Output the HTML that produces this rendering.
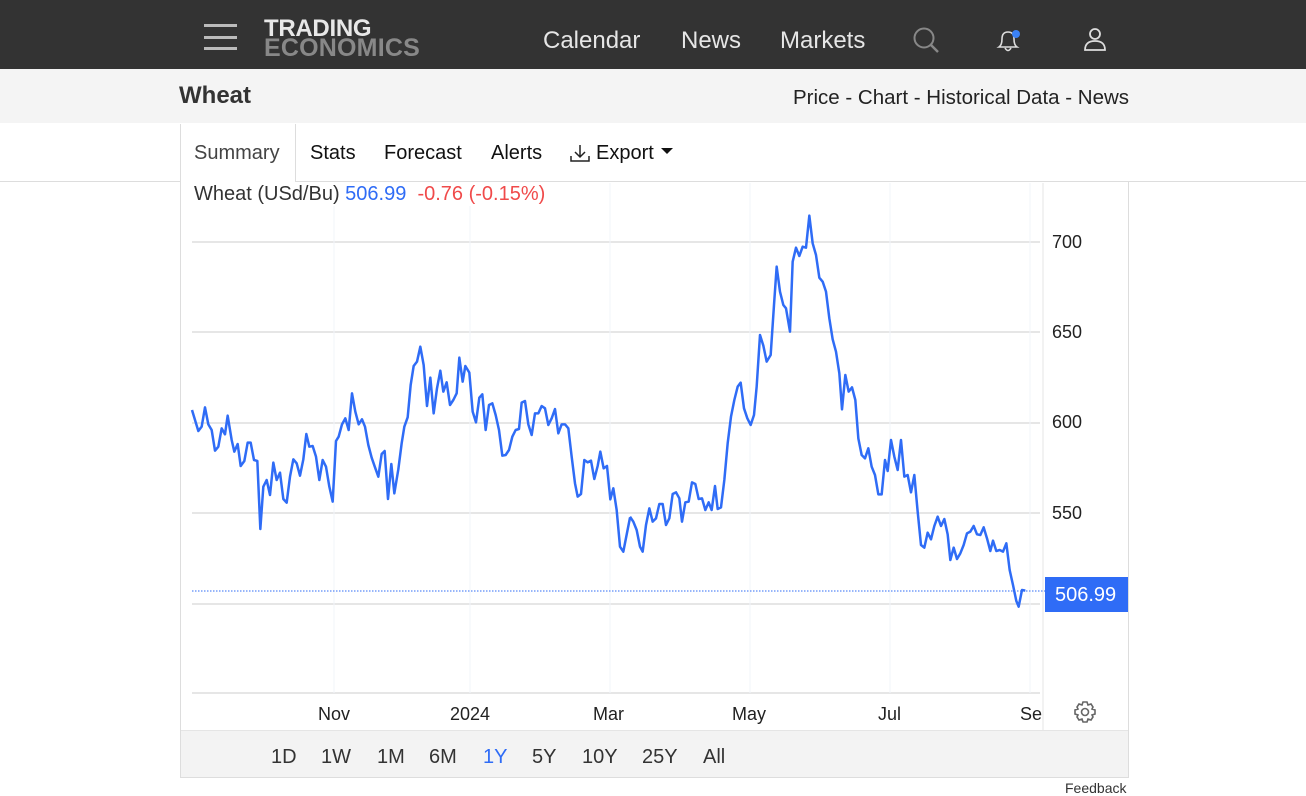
<!DOCTYPE html>
<html><head><meta charset="utf-8"><style>
*{margin:0;padding:0;box-sizing:border-box}
body{width:1306px;height:794px;overflow:hidden;background:#fff;font-family:"Liberation Sans",Arial,sans-serif;position:relative;color:#222}
.hdr{position:absolute;left:0;top:0;width:1306px;height:69px;background:#333}
.nav{position:absolute;top:27px;color:#e6e6e6;font-size:24px}
.sub{position:absolute;left:0;top:69px;width:1306px;height:54px;background:#f4f4f4}
.abs{position:absolute}
.tab{position:absolute;top:142px;font-size:20px;color:#111}
.ax{position:absolute;font-size:18px;color:#222}
.rg{position:absolute;top:746px;font-size:20px;color:#333}
</style></head><body>
<div class="hdr">
 <div class="abs" style="left:204px;top:24px;width:33px;height:3px;background:#bbb"></div>
 <div class="abs" style="left:204px;top:36px;width:33px;height:3px;background:#bbb"></div>
 <div class="abs" style="left:204px;top:47px;width:33px;height:3px;background:#bbb"></div>
 <div class="abs" style="left:264px;top:18px;font-size:24px;font-weight:bold;color:#e8e8e8;line-height:21px;letter-spacing:-0.3px">TRADING</div>
 <div class="abs" style="left:264px;top:38px;font-size:25px;font-weight:bold;color:#888;line-height:21px;letter-spacing:0.2px">ECONOMICS</div>
 <div class="nav" style="left:543px">Calendar</div>
 <div class="nav" style="left:681px">News</div>
 <div class="nav" style="left:780px">Markets</div>
 <svg class="abs" style="left:910px;top:24px" width="32" height="32"><circle cx="14" cy="14" r="9.5" fill="none" stroke="#888" stroke-width="2"/><line x1="21" y1="21" x2="28" y2="28" stroke="#888" stroke-width="2.5"/></svg>
 <svg class="abs" style="left:994px;top:26px" width="30" height="30"><path d="M5 21 Q8 19 8 13 Q8 6 14 6 Q20 6 20 13 Q20 19 23 21 Z" fill="none" stroke="#ddd" stroke-width="1.6"/><path d="M11 22 Q14 27 17 22" fill="none" stroke="#ddd" stroke-width="1.6"/><circle cx="22" cy="8" r="4" fill="#3b82f6"/></svg>
 <svg class="abs" style="left:1082px;top:26px" width="28" height="28"><circle cx="13" cy="8" r="5" fill="none" stroke="#ddd" stroke-width="1.8"/><path d="M3 24 Q3 15 13 15 Q23 15 23 24 Z" fill="none" stroke="#ddd" stroke-width="1.8"/></svg>
</div>
<div class="sub">
 <div class="abs" style="left:179px;top:13px;font-size:24px;font-weight:bold;color:#333">Wheat</div>
 <div class="abs" style="left:793px;top:17px;font-size:20.5px;color:#222">Price - Chart - Historical Data - News</div>
</div>
<div class="abs" style="left:0;top:181px;width:1306px;height:1px;background:#ddd"></div>
<div class="abs" style="left:180px;top:124px;width:116px;height:58px;border-left:1px solid #ddd;border-right:1px solid #ddd;background:#fff"></div>
<div class="tab" style="left:194px;color:#444">Summary</div>
<div class="tab" style="left:310px">Stats</div>
<div class="tab" style="left:384px">Forecast</div>
<div class="tab" style="left:491px">Alerts</div>
<svg class="abs" style="left:569px;top:142px" width="22" height="22"><path d="M11 3 V15 M6 10 L11 15 L16 10 M2 14 V19 H20 V14" fill="none" stroke="#222" stroke-width="1.5"/></svg>
<div class="tab" style="left:596px">Export</div>
<svg class="abs" style="left:661px;top:148px" width="12" height="8"><path d="M0 0 H12 L6 6 Z" fill="#111"/></svg>
<div class="abs" style="left:180px;top:182px;width:949px;height:596px;border:1px solid #ddd;border-top:none"></div>
<div class="abs" style="left:181px;top:730px;width:947px;height:47px;background:#f3f3f3;border-top:1px solid #e5e5e5"></div>
<svg class="abs" style="left:0;top:0" width="1306" height="794">
 <g stroke="#e6e6e6" stroke-width="2">
  <line x1="192" y1="242" x2="1040" y2="242"/><line x1="192" y1="332" x2="1040" y2="332"/><line x1="192" y1="423" x2="1040" y2="423"/><line x1="192" y1="513" x2="1040" y2="513"/><line x1="192" y1="604" x2="1040" y2="604"/><line x1="192" y1="693" x2="1040" y2="693"/>
 </g>
 <g stroke="#f1f4f9" stroke-width="1">
  <line x1="334" y1="183" x2="334" y2="693"/><line x1="470" y1="183" x2="470" y2="693"/><line x1="610" y1="183" x2="610" y2="693"/><line x1="750" y1="183" x2="750" y2="693"/><line x1="890" y1="183" x2="890" y2="693"/><line x1="1030" y1="183" x2="1030" y2="693"/>
 </g>
 <line x1="1043" y1="183" x2="1043" y2="730" stroke="#e5e5e5" stroke-width="1"/>
 <line x1="192" y1="591" x2="1045" y2="591" stroke="#2f6cf6" stroke-width="1" stroke-dasharray="1.5 1.5"/>
 <g transform="translate(180,330) scale(0.33333)"><polyline fill="none" stroke="#2f6cf6" stroke-width="2.5" vector-effect="non-scaling-stroke" stroke-linejoin="round" points="36,240 55,303 65,290 75,232 85,283 95,300 105,362 115,350 125,295 135,313 143,257 155,330 163,365 173,342 182,408 193,393 203,338 212,338 222,390 232,393 241,597 250,470 260,450 270,495 280,398 290,450 300,428 310,507 320,518 330,440 340,388 350,400 360,437 370,388 379,312 388,350 398,348 408,380 418,450 428,390 438,410 448,470 458,515 468,333 476,320 486,283 496,265 506,300 516,190 526,245 536,283 546,268 555,290 565,345 575,383 585,412 595,440 605,372 614,363 624,507 634,402 643,490 655,418 665,340 673,290 683,262 692,165 701,108 711,95 721,50 731,105 741,228 751,143 761,250 771,175 781,122 790,185 800,157 810,225 820,210 830,190 838,83 848,155 856,108 868,128 878,245 888,277 898,203 907,193 917,300 927,225 937,220 947,255 957,300 967,377 977,375 987,360 997,320 1007,300 1017,297 1025,218 1035,213 1045,283 1055,315 1065,250 1075,250 1085,228 1095,235 1105,285 1115,265 1125,237 1135,310 1145,283 1155,283 1165,295 1175,380 1185,460 1193,500 1203,492 1213,390 1223,397 1233,392 1243,447 1253,408 1261,365 1271,415 1281,408 1291,508 1300,475 1310,540 1320,650 1330,665 1350,563"/></g>
 <g transform="translate(620,200) scale(0.33333)"><polyline fill="none" stroke="#2f6cf6" stroke-width="2.5" vector-effect="non-scaling-stroke" stroke-linejoin="round" points="30,950 40,965 50,990 60,1040 68,1055 78,975 88,925 98,965 108,955 118,912 128,912 138,975 148,955 158,882 168,877 178,895 186,965 196,907 206,905 216,847 226,852 236,897 246,895 256,930 266,907 275,930 285,858 293,927 303,922 313,840 323,730 333,650 343,600 353,560 362,548 372,625 382,655 392,675 402,645 410,560 420,405 430,437 440,485 452,465 462,315 470,200 480,275 490,315 498,325 510,395 518,185 528,143 538,168 548,140 558,143 568,47 578,130 588,165 598,233 608,245 618,275 628,355 638,418 648,455 658,520 666,628 676,525 686,575 696,562 706,600 715,715 725,765 735,775 745,745 755,800 765,825 775,883 785,883 795,780 803,813 813,720 823,770 833,810 843,720 853,830 863,825 873,877 883,825 893,935 903,1035 913,1043 923,998 933,1018 943,978 953,950 963,978 973,957 983,1003 991,1080 1001,1043 1011,1077 1021,1060 1031,1035 1041,1000 1051,995 1061,978 1071,1003 1081,1005 1091,982 1101,1015 1111,1053 1119,1022 1129,1053 1139,1050 1149,1055 1159,1030 1169,1110 1179,1155 1189,1203 1196,1220 1206,1170 1216,1172"/></g>
 <g transform="translate(1085,712)" fill="none" stroke="#666" stroke-width="1.6"><circle r="3.5"/><path d="M-2 -10 H2 L3 -7 L6 -8 L8 -5 L7 -3 L10 -2 V2 L7 3 L8 5 L6 8 L3 7 L2 10 H-2 L-3 7 L-6 8 L-8 5 L-7 3 L-10 2 V-2 L-7 -3 L-8 -5 L-6 -8 L-3 -7 Z"/></g>
</svg>
<div class="abs" style="left:194px;top:183px;font-size:20px;color:#333;background:#fff;padding-right:4px">Wheat (USd/Bu) <span style="color:#2f6cf6">506.99</span>&nbsp; <span style="color:#f04a4a">-0.76 (-0.15%)</span></div>
<div class="ax" style="left:1052px;top:232px">700</div>
<div class="ax" style="left:1052px;top:322px">650</div>
<div class="ax" style="left:1052px;top:412px">600</div>
<div class="ax" style="left:1052px;top:503px">550</div>
<div class="abs" style="left:1045px;top:577px;width:83px;height:35px;background:#2f6cf6;color:#fff;font-size:20px;padding:7px 0 0 10px">506.99</div>
<div class="ax" style="left:318px;top:704px">Nov</div>
<div class="ax" style="left:450px;top:704px">2024</div>
<div class="ax" style="left:593px;top:704px">Mar</div>
<div class="ax" style="left:732px;top:704px">May</div>
<div class="ax" style="left:878px;top:704px">Jul</div>
<div class="ax" style="left:1020px;top:704px">Se</div>
<div class="rg" style="left:271px">1D</div>
<div class="rg" style="left:321px">1W</div>
<div class="rg" style="left:377px">1M</div>
<div class="rg" style="left:429px">6M</div>
<div class="rg" style="left:483px;color:#2f6cf6">1Y</div>
<div class="rg" style="left:532px">5Y</div>
<div class="rg" style="left:582px">10Y</div>
<div class="rg" style="left:642px">25Y</div>
<div class="rg" style="left:703px">All</div>
<div class="abs" style="left:1065px;top:780px;font-size:14px;color:#333">Feedback</div>
</body></html>
